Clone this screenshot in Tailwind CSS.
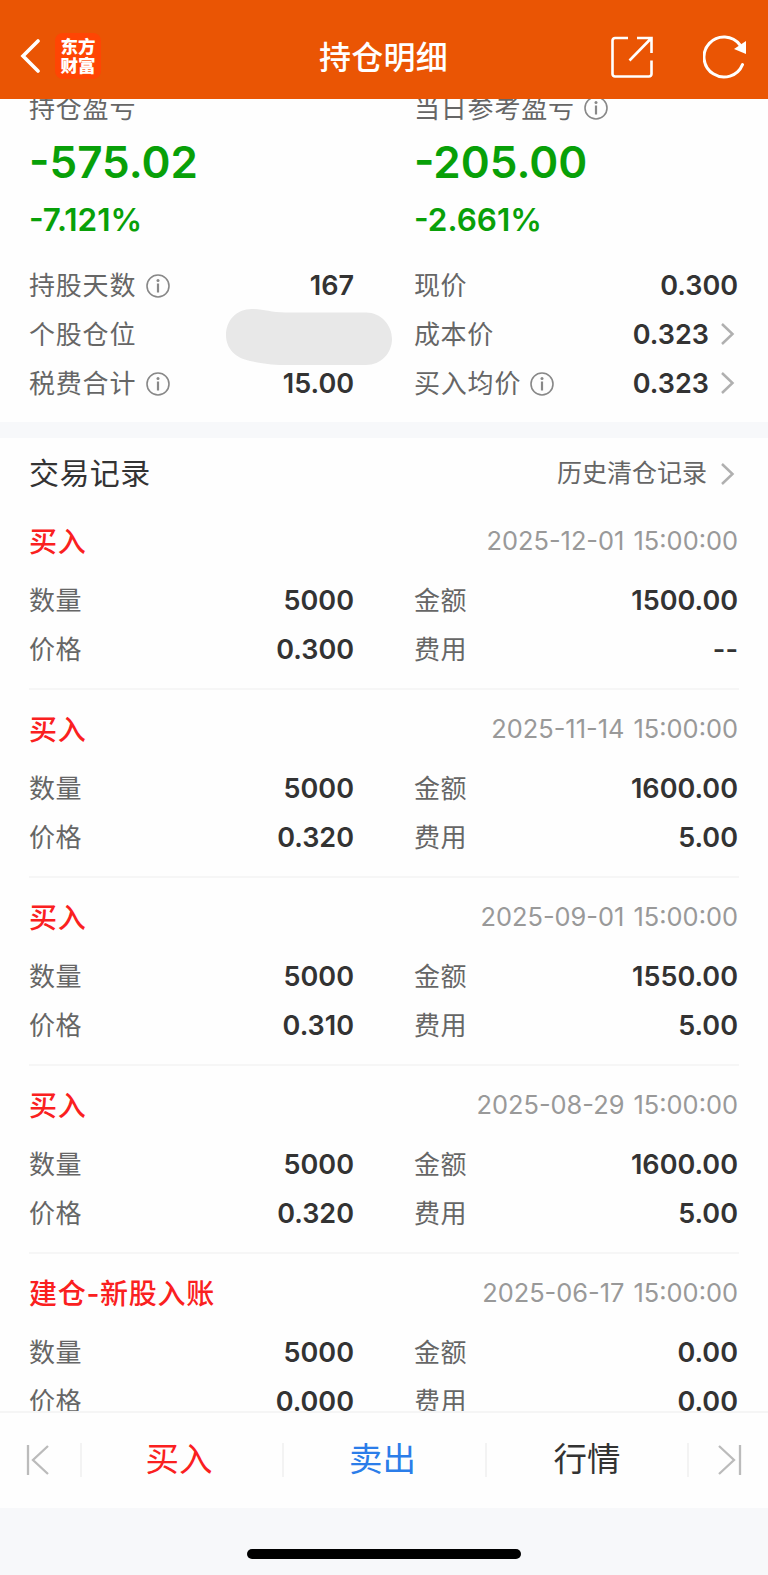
<!DOCTYPE html>
<html lang="zh-CN">
  <head>
    <meta charset="UTF-8" />
    <meta name="viewport" content="width=device-width, initial-scale=1.0" />
    <title>持仓明细</title>
    <script src="https://cdn.jsdelivr.net/npm/@tailwindcss/browser@4"></script>
  </head>
  <body
    class="h-[1575px] w-[768px] overflow-hidden flex flex-col bg-[#fefefe] text-[#333] font-['Inter','Noto_Sans_CJK_SC',sans-serif]"
  >
    <!-- Shared icons -->
    <svg class="hidden">
      <symbol id="info" viewBox="0 0 24 24" fill="none">
        <circle cx="12" cy="12" r="11" stroke="#888" stroke-width="1.6" />
        <circle cx="12" cy="6.6" r="1.5" fill="#888" />
        <path d="M12 9.5v9" stroke="#888" stroke-width="2.2" />
      </symbol>
      <symbol id="chevron" viewBox="0 0 18 24" fill="none">
        <path d="M2 2l10.5 10L2 22" stroke="#b0b0b0" stroke-width="2.5" />
      </symbol>
    </svg>

    <!-- Header -->
    <header
      class="relative z-10 h-[99px] shrink-0 bg-[#ea5504] text-white flex items-center justify-between pt-[13px] pl-5 pr-[21px]"
    >
      <div class="flex items-center w-[150px]">
        <svg class="w-5 h-9" viewBox="0 0 20 36" fill="none">
          <path d="M18 3L3 18l15 15" stroke="#fff" stroke-width="3.6" stroke-linecap="round" />
        </svg>
        <div
          class="ml-[15px] w-[46px] h-[46px] rounded-lg bg-[#ff4504] flex flex-col items-center justify-center text-[17.5px] leading-[19px] font-black"
        >
          <span>东方</span>
          <span>财富</span>
        </div>
      </div>
      <h1 class="pt-[3px] text-[32px] font-medium leading-none tracking-[0.3px]">持仓明细</h1>
      <div class="flex items-center justify-end gap-[50px] w-[150px] pt-[2px]">
        <svg class="w-[42px] h-[42px]" viewBox="0 0 42 42" fill="none" stroke="#fff" stroke-width="2.6">
          <path d="M17 2H4a2.5 2.5 0 0 0-2.5 2.5V38A2.5 2.5 0 0 0 4 40.500h34a2.500 2.500 0 0 0 2.500-2.500V24.500" />
          <path d="M26 2h14.500v15M40 2.500L18.500 24.500" />
        </svg>
        <svg class="w-[44px] h-[44px]" viewBox="0 0 44 44" fill="none">
          <path d="M39.5 29.6A20 20 0 1 1 37 10" stroke="#fff" stroke-width="3" stroke-linecap="round" />
          <path d="M43 6v13l-12-5z" fill="#fff" />
        </svg>
      </div>
    </header>

    <main class="-mt-4 h-[1328px] shrink-0 overflow-hidden">
      <!-- Position summary -->
      <section class="grid grid-cols-[325px_324px] gap-x-[60px] pl-[29px] pb-[14px]">
        <div>
          <div class="h-[49px] pt-px flex items-center text-[26px] tracking-[0.8px] text-[#666]">持仓盈亏</div>
          <div class="h-[60px] flex items-center text-[44px] font-semibold text-[#08a008]">-575.02</div>
          <div class="h-[53px] pt-0.5 flex items-center text-[31.5px] font-semibold text-[#08a008]">-7.121%</div>
        </div>
        <div>
          <div class="h-[49px] pt-px flex items-center text-[26px] tracking-[0.8px] text-[#666]">
            当日参考盈亏
            <svg class="ml-[9px] -mt-px w-6 h-6"><use href="#info" /></svg>
          </div>
          <div class="h-[60px] flex items-center text-[44px] font-semibold text-[#08a008]">-205.00</div>
          <div class="h-[53px] pt-0.5 flex items-center text-[31.5px] font-semibold text-[#08a008]">-2.661%</div>
        </div>

        <div class="pt-[16px]">
          <div class="h-[49px] flex items-center">
            <span class="text-[26px] tracking-[0.8px] text-[#666]">持股天数</span>
            <svg class="ml-[10px] w-6 h-6"><use href="#info" /></svg>
            <span class="ml-auto pt-0.5 text-[27px] font-semibold">167</span>
          </div>
          <div class="relative h-[49px] flex items-center">
            <span class="text-[26px] tracking-[0.8px] text-[#666]">个股仓位</span>
            <!-- Hidden value -->
            <svg class="absolute left-[197px] -top-px w-[166px] h-[56px]" viewBox="0 0 166 56">
              <path
                d="M26 0C10 0 0 12 0 26c0 14 10 23 24 26 10 2 20 4 34 4h82c15 0 26-12 26-26S155 3.500 140 3.500H60C44 3.500 38 0 26 0z"
                fill="#e8e8e8"
              />
            </svg>
          </div>
          <div class="h-[49px] flex items-center">
            <span class="text-[26px] tracking-[0.8px] text-[#666]">税费合计</span>
            <svg class="ml-[10px] w-6 h-6"><use href="#info" /></svg>
            <span class="ml-auto pt-0.5 text-[27px] font-semibold">15.00</span>
          </div>
        </div>
        <div class="pt-[16px]">
          <div class="h-[49px] flex items-center">
            <span class="text-[26px] tracking-[0.6px] text-[#666]">现价</span>
            <span class="ml-auto pt-0.5 text-[27px] font-semibold">0.300</span>
          </div>
          <div class="h-[49px] flex items-center">
            <span class="text-[26px] tracking-[0.6px] text-[#666]">成本价</span>
            <span class="ml-auto pt-0.5 text-[27px] font-semibold">0.323</span>
            <svg class="ml-[11px] -mt-px w-[18px] h-6"><use href="#chevron" /></svg>
          </div>
          <div class="h-[49px] flex items-center">
            <span class="text-[26px] tracking-[0.8px] text-[#666]">买入均价</span>
            <svg class="ml-[9px] w-6 h-6"><use href="#info" /></svg>
            <span class="ml-auto pt-0.5 text-[27px] font-semibold">0.323</span>
            <svg class="ml-[11px] -mt-px w-[18px] h-6"><use href="#chevron" /></svg>
          </div>
        </div>
      </section>

      <div class="h-4 bg-[#f7f8fa]"></div>

      <!-- Trade records -->
      <section class="px-[29px]">
        <div class="h-[64px] pt-[6px] flex items-center justify-between">
          <h2 class="text-[30px] tracking-[0.4px]">交易记录</h2>
          <a class="flex items-center pt-0.5 pr-px text-[25px] text-[#666]">
            历史清仓记录
            <svg class="ml-[13px] -mt-px w-[18px] h-6"><use href="#chevron" /></svg>
          </a>
        </div>
        <div id="records"></div>
      </section>
    </main>

    <!-- Bottom actions -->
    <nav class="h-[97px] shrink-0 border-t-2 border-[#f5f5f5] bg-[#fefefe] flex items-center pb-0.5 text-[33.5px]">
      <div class="w-[80px] pl-[26px]">
        <svg class="w-6 h-[30px]" viewBox="0 0 24 30" fill="none" stroke="#bbb" stroke-width="2.3">
          <path d="M2 0v30M22 1L7 15l15 14" />
        </svg>
      </div>
      <button class="w-[202px] h-[34px] border-l-2 border-[#f3f3f3] flex items-center justify-center pr-1.5 text-[#fa2020]">买入</button>
      <button class="w-[203px] h-[34px] border-l-2 border-[#f3f3f3] flex items-center justify-center pr-1 text-[#2b7de9]">卖出</button>
      <button class="w-[202px] h-[34px] border-l-2 border-[#f3f3f3] flex items-center justify-center">行情</button>
      <div class="w-[81px] h-[34px] border-l-2 border-[#f3f3f3] flex items-center pl-[29px]">
        <svg class="w-6 h-[30px]" viewBox="0 0 24 30" fill="none" stroke="#bbb" stroke-width="2.3">
          <path d="M22 0v30M1 1l15 14L1 29" />
        </svg>
      </div>
    </nav>

    <!-- Home indicator -->
    <footer class="flex-1 bg-[#f7f8fa] flex justify-center pt-[41px]">
      <div class="w-[274px] h-[10px] rounded-full bg-black"></div>
    </footer>

    <script>
      const records = [
        { type: "买入", time: "2025-12-01 15:00:00", count: "5000", amount: "1500.00", price: "0.300", fee: "--" },
        { type: "买入", time: "2025-11-14 15:00:00", count: "5000", amount: "1600.00", price: "0.320", fee: "5.00" },
        { type: "买入", time: "2025-09-01 15:00:00", count: "5000", amount: "1550.00", price: "0.310", fee: "5.00" },
        { type: "买入", time: "2025-08-29 15:00:00", count: "5000", amount: "1600.00", price: "0.320", fee: "5.00" },
        { type: "建仓-新股入账", time: "2025-06-17 15:00:00", count: "5000", amount: "0.00", price: "0.000", fee: "0.00" },
      ];

      // One label / value pair
      function createCell(label, value) {
        return `
          <div class="h-[49px] flex items-center justify-between">
            <span class="text-[26px] tracking-[0.6px] text-[#666]">${label}</span>
            <span class="pt-px text-[27px] font-semibold">${value}</span>
          </div>
        `;
      }

      function createRecord(record) {
        return `
          <div class="h-[188px] border-b-2 border-[#f6f6f6] pr-px pt-4">
            <div class="h-[48px] mb-[10px] flex items-center justify-between">
              <span class="text-[28px] tracking-[0.7px] font-medium text-[#fa2020]">${record.type}</span>
              <span class="-mt-0.5 text-[25.4px] [word-spacing:2px] text-[#999]">${record.time}</span>
            </div>
            <div class="grid grid-cols-[325px_324px] gap-x-[60px]">
              ${createCell("数量", record.count)}
              ${createCell("金额", record.amount)}
              ${createCell("价格", record.price)}
              ${createCell("费用", record.fee)}
            </div>
          </div>
        `;
      }

      document.getElementById("records").innerHTML = records
        .map(createRecord)
        .join("");
    </script>
  </body>
</html>
